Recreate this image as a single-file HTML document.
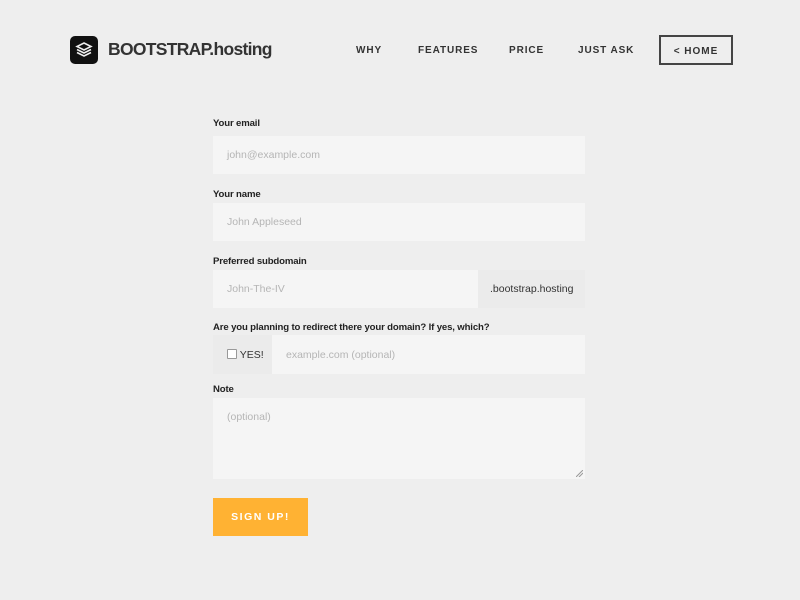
<!DOCTYPE html>
<html><head><style>
body{margin:0;width:800px;height:600px;background:#eeeeee;font-family:"Liberation Sans",Arial,sans-serif;position:relative;overflow:hidden}
.a{position:absolute}
.lbl{position:absolute;left:213px;font-size:9.6px;font-weight:bold;color:#222;letter-spacing:-0.15px}
.in{position:absolute;background:#f5f5f5;color:#b5b5b5;font-size:10.5px;box-sizing:border-box;padding-left:14px}
.nav{position:absolute;top:45px;font-size:10px;font-weight:bold;letter-spacing:0.9px;color:#333}
</style></head><body>
<div class="a" style="left:70px;top:36px;width:28px;height:28px;background:#111;border-radius:5px">
<svg width="28" height="28" viewBox="0 0 28 28"><g fill="none" stroke="#eee" stroke-width="1.6"><path d="M14 7l7 3.5-7 3.5-7-3.5z"/><path d="M7 13.5l7 3.5 7-3.5"/><path d="M7 16.5l7 3.5 7-3.5"/></g></svg></div>
<div class="a" style="left:108px;top:39px;font-size:17.5px;color:#333;font-weight:bold;letter-spacing:-0.7px">BOOTSTRAP.hosting</div>
<div class="nav" style="left:356px">WHY</div>
<div class="nav" style="left:418px">FEATURES</div>
<div class="nav" style="left:509px">PRICE</div>
<div class="nav" style="left:578px">JUST ASK</div>
<div class="a" style="left:659px;top:35px;width:70px;height:26px;border:2px solid #444;font-size:10px;font-weight:bold;letter-spacing:1px;color:#333;text-align:center;line-height:29px">&lt; HOME</div>

<div class="lbl" style="top:118px">Your email</div>
<div class="in" style="left:213px;top:136px;width:372px;height:38px;line-height:39px">john@example.com</div>
<div class="lbl" style="top:189px">Your name</div>
<div class="in" style="left:213px;top:203px;width:372px;height:38px;line-height:39px">John Appleseed</div>
<div class="lbl" style="top:256px">Preferred subdomain</div>
<div class="in" style="left:213px;top:270px;width:265px;height:38px;line-height:39px">John-The-IV</div>
<div class="in" style="left:478px;top:270px;width:107px;height:38px;line-height:39px;background:#ebebeb;color:#333;padding-left:12px">.bootstrap.hosting</div>
<div class="lbl" style="top:322px">Are you planning to redirect there your domain? If yes, which?</div>
<div class="in" style="left:213px;top:335px;width:59px;height:39px;line-height:40px;background:#ebebeb;color:#333">
<span style="display:inline-block;width:8px;height:8px;border:1px solid #999;background:#fff;vertical-align:-1px;border-radius:1px"></span> YES!</div>
<div class="in" style="left:272px;top:335px;width:313px;height:39px;line-height:40px">example.com (optional)</div>
<div class="lbl" style="top:384px">Note</div>
<div class="in" style="left:213px;top:398px;width:372px;height:81px;padding:13px 14px">(optional)
<svg class="a" style="right:2px;bottom:2px" width="7" height="7"><path d="M7 0L0 7M7 3L3 7" stroke="#999" stroke-width="1"/></svg></div>
<div class="a" style="left:213px;top:498px;width:95px;height:38px;background:#ffb233;color:#fff;font-size:10.5px;font-weight:bold;letter-spacing:1.5px;text-align:center;line-height:39px">SIGN UP!</div>
</body></html>
